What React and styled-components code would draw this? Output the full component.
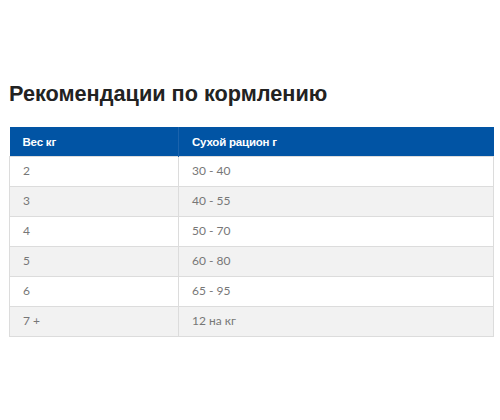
import React from "react";
import styled, { createGlobalStyle } from "styled-components";

const Global = createGlobalStyle`
  html, body { margin: 0; padding: 0; background: #fff; }
  body { width: 500px; height: 420px; overflow: hidden; }
`;

const Page = styled.div`
  padding: 81px 6px 0 9px;
  font-family: Lato, "Liberation Sans", sans-serif;
`;

const Title = styled.h2`
  margin: 0 0 20px;
  font-family: "Liberation Sans", Arial, sans-serif;
  font-weight: 700;
  font-size: 21.7px;
  line-height: 26px;
  color: #222;
`;

const Table = styled.table`
  width: 485px;
  border-collapse: collapse;
  table-layout: fixed;
`;

const Head = styled.th`
  background: #0154a4;
  color: #fff;
  text-align: left;
  font-family: "Liberation Sans", Arial, sans-serif;
  font-weight: 700;
  font-size: 11.5px;
  letter-spacing: -0.2px;
  height: 29px;
  padding: 0 13px;
  border-right: 1px solid #1a63ad;
  &:last-child { border-right: none; }
`;

const Row = styled.tr`
  background: ${(p) => (p.$alt ? "#f2f2f2" : "#fff")};
`;

const Cell = styled.td`
  height: 30px;
  box-sizing: border-box;
  padding: 0 13px 2px;
  font-family: Lato, sans-serif;
  font-size: 12px;
  color: #777;
  border: 1px solid #dcdcdc;
`;

const rows = [
  ["2", "30 - 40"],
  ["3", "40 - 55"],
  ["4", "50 - 70"],
  ["5", "60 - 80"],
  ["6", "65 - 95"],
  ["7 +", "12 на кг"],
];

export default function App() {
  return (
    <>
      <Global />
      <Page>
        <Title>Рекомендации по кормлению</Title>
        <Table>
          <colgroup>
            <col style={{ width: 169 }} />
            <col />
          </colgroup>
          <thead>
            <tr>
              <Head>Вес кг</Head>
              <Head>Сухой рацион г</Head>
            </tr>
          </thead>
          <tbody>
            {rows.map((r, i) => (
              <Row key={i} $alt={i % 2 === 1}>
                <Cell>{r[0]}</Cell>
                <Cell>{r[1]}</Cell>
              </Row>
            ))}
          </tbody>
        </Table>
      </Page>
    </>
  );
}
